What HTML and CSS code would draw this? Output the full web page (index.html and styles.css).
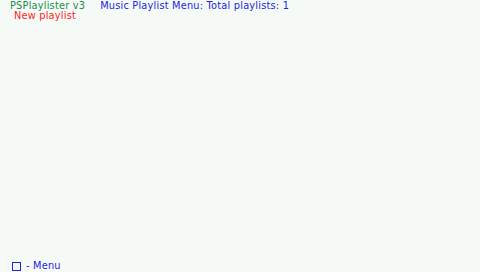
FILE: index.html
```html
<!DOCTYPE html>
<html>
<head>
<meta charset="utf-8">
<link rel="stylesheet" href="styles.css">
</head>
<body>
<div class="screen">
  <div class="header">
    <span class="app">PSPlaylister v3</span>
    <span class="title">Music Playlist Menu: Total playlists: 1</span>
  </div>
  <div class="list">
    <div class="item selected">New playlist</div>
  </div>
  <div class="footer">
    <span class="square"></span>
    <span class="hint">- Menu</span>
  </div>
</div>
</body>
</html>
```
FILE: styles.css
```css
html, body {
  margin: 0;
  padding: 0;
  background: #f5faf6;
}
.screen {
  width: 480px;
  height: 272px;
  display: flex;
  flex-direction: column;
  font-family: "DejaVu Sans", sans-serif;
  font-size: 9.8px;
  letter-spacing: 0.2px;
  line-height: 10px;
  overflow: hidden;
}
.header {
  display: flex;
  padding: 1px 0 0 10px;
  gap: 15px;
}
.app { color: #169048; }
.title { color: #2424e0; }
.list {
  flex: 1;
  padding: 0 0 0 14px;
}
.item.selected { color: #ff2222; }
.footer {
  display: flex;
  align-items: center;
  gap: 5px;
  padding: 0 0 1px 12px;
  height: 10px;
}
.square {
  width: 7px;
  height: 7px;
  border: 1px solid #2020f0;
}
.hint { color: #2424e0; }
```
